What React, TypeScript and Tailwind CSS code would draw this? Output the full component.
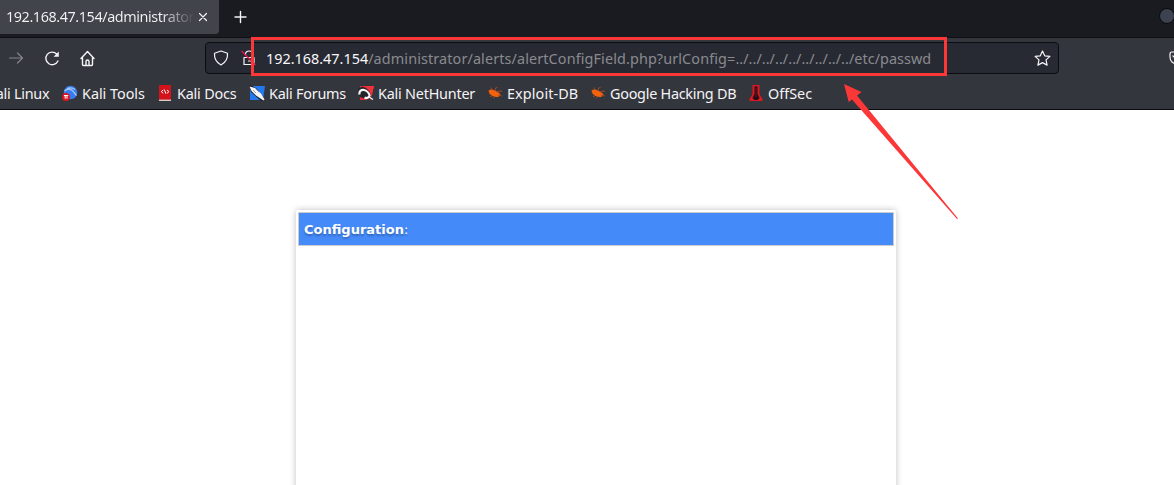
import React from "react";

const stroke = { fill: "none", stroke: "#f4f4f6", strokeWidth: 1.2, strokeLinecap: "round", strokeLinejoin: "round" } as const;

function ToolsIcon() {
  return (
    <svg width="16" height="16" viewBox="0 0 16 16">
      <circle cx="8.5" cy="7.5" r="6.8" fill="#367bf0" />
      <path d="M2.500 6C6 3 10.500 4 12 7.500l2.500 3M5 3.500c3-1 6-.5 8 1" fill="none" stroke="#a9cbf8" strokeWidth="1.200" />
      <circle cx="4" cy="12" r="3.900" fill="#e0141f" />
      <path d="M2 10.500h4.200M3.200 10.500v3.200M5 10.500v3.200" stroke="#fff" strokeWidth="1" />
    </svg>
  );
}

function DocsIcon() {
  return (
    <svg width="16" height="16" viewBox="0 0 16 16">
      <path d="M3 0h11v16H3a1 1 0 0 1-1-1V1a1 1 0 0 1 1-1z" fill="#d4121a" />
      <path d="M2 14.600h12V16H2z" fill="#d8c9c9" />
      <path d="M6.200 5 4.300 6.600l1.900 1.700M10 5l1.900 1.600L10 8.300M7.300 4.500l1.600 4.200" fill="none" stroke="#fff" strokeWidth="1" />
    </svg>
  );
}

function ForumsIcon() {
  return (
    <svg width="16" height="16" viewBox="0 0 16 16">
      <path d="M1 1h15l-2 14H1z" fill="#2478ef" />
      <path d="M0 0h2l6 4 7 10v2h-3L2 7z" fill="#20242c" />
      <path d="M.5 1.500 6 3l3.500 3.500L12 8.500l3.500 6-1 1-4.500-3-3-2-4.500-4.500z" fill="#f5f5f5" />
      <path d="m4 5 3 3" stroke="#8a94a3" strokeWidth=".8" />
    </svg>
  );
}

function HunterIcon() {
  return (
    <svg width="16" height="16" viewBox="0 0 16 16">
      <path d="M2 1h14l-3 14H2z" fill="#e62b32" />
      <path d="M0 4 4 1.500l4 1.500 4 4 2 7-4 1-8-3-2-3z" fill="#25262c" />
      <path d="M1.500 9.500C1 5.500 3.500 4.500 6 5s5 3 5.500 5-2.500 4-5 2.500" fill="none" stroke="#f7f7f7" strokeWidth="2.200" />
      <path d="m11 12 4 2.500" stroke="#f7f7f7" strokeWidth="1.400" />
      <path d="M7 1h9l-2.500 9L11 5z" fill="#f0333b" />
    </svg>
  );
}

function BugIcon() {
  return (
    <svg width="16" height="16" viewBox="0 0 16 16">
      <path d="M1.500 6C2.500 4 5 4 8 5.500l4 2.200 1.500 2-2 2C8 12.500 4.500 11 2.500 8.500z" fill="#f4610c" />
      <path d="m5 5-1-2.500M8 6l.5-3 2-.5M10 7l3-1 2 .5M5 11l-2 .5M8 11.500 6 13.500M11 10l4 1" fill="none" stroke="#a34a22" strokeWidth=".9" />
    </svg>
  );
}

function OffSecIcon() {
  return (
    <svg width="16" height="16" viewBox="0 0 16 16">
      <path d="M4.500 0h7v9l3 5v2H1.500v-2l3-5z" fill="#da1823" />
      <path d="M6.500 1.500h3V9l2 4-2 2h-3l-2-2 2-4z" fill="#260d13" />
      <path d="M8 3v9" stroke="#79131c" />
    </svg>
  );
}

function Bookmark({ icon, label, width }: { icon: React.ReactNode; label: string; width: string }) {
  return (
    <div className={`flex shrink-0 items-center ${width}`}>
      <span className="w-5 shrink-0">{icon}</span>
      <span>{label}</span>
    </div>
  );
}

function TabStrip() {
  return (
    <div className="flex h-[38px] shrink-0 items-start border-b border-[#0e0f13] bg-[#1a1b20]">
      <div className="flex h-[34px] w-[219px] shrink-0 items-center rounded-br bg-[#42444b] pl-[6px] text-[14.4px] text-[#f4f4f6]">
        <span className="w-[189px] bg-linear-to-r from-[#f4f4f6] from-82% to-[#42444b] to-100% bg-clip-text tracking-[-0.42px] whitespace-nowrap text-transparent">192.168.47.154/administrator</span>
        <svg className="ml-[3px]" width="10" height="10" viewBox="0 0 10 10"><path d="m1.500 1.500 7 7M8.500 1.500l-7 7" {...stroke} /></svg>
      </div>
      <svg className="mt-[10px] ml-[14px]" width="14" height="14" viewBox="0 0 14 14"><path d="M7.500 1.500v11M2 7h11" {...stroke} strokeWidth="1.400" /></svg>
      <div className="mt-2 ml-auto h-4 w-[15px] shrink-0 overflow-hidden">
        <div className="size-4 rounded-full border border-[#090a0e] bg-[#3d4251]" />
      </div>
    </div>
  );
}

function NavBar() {
  return (
    <div className="flex h-10 shrink-0 items-center">
      <svg className="ml-2" width="16" height="16" viewBox="0 0 16 16"><path d="M1.500 8h13M9.500 3l5 5-5 5" {...stroke} stroke="#85868c" /></svg>
      <svg className="ml-5" width="16" height="16" viewBox="0 0 16 16"><path d="M13.900 11A6.300 6.300 0 1 1 12.700 4" {...stroke} strokeWidth="1.400" /><path d="M14.800 1.500v5.200H9.600z" fill="#f4f4f6" /></svg>
      <svg className="ml-5" width="16" height="17" viewBox="0 0 16 17"><path d="M1 8.500 7.500 1.500l6.500 7M2.500 7.500v7c0 .8.300 1 1 1h8c.7 0 1-.2 1-1v-7M6 15.500v-4c0-2 3-2 3 0v4" {...stroke} strokeWidth="1.400" /></svg>
      <div className="ml-[109px] flex h-8 w-[854px] shrink-0 items-center rounded border border-[#0c0d12] bg-[#282a33] text-[14.4px] whitespace-nowrap">
        <svg className="ml-[7px] shrink-0" width="16" height="16" viewBox="0 0 16 16"><path d="M8 1 14.500 3.300c.4 5-1.500 9-6.500 11.700C3 12.300 1.100 8.300 1.500 3.300z" {...stroke} /></svg>
        <svg className="ml-3 shrink-0" width="16" height="16" viewBox="0 0 16 16"><path d="M3 7.500h10v7H3zM4.500 5V4c0-4 7-4 7 0v3.500M7.500 11h2" {...stroke} /><path d="m.5 1 14 14" stroke="#e5124d" strokeWidth="1.300" /></svg>
        <span className="ml-[9px] w-[768px] pt-[2px] text-[#f7f7fa]">192.168.47.154<span className="tracking-[0.115px] text-[#898a90]">/administrator/alerts/alertConfigField.php?urlConfig=<span className="tracking-[0.05px]">../../../../../../../../../etc/passwd</span></span></span>
        <svg className="shrink-0" width="17" height="17" viewBox="0 0 17 17"><path d="m8.500 1 2.200 4.800 5.200.6-3.900 3.500 1.100 5.200-4.600-2.500-4.600 2.500L5 9.900 1.100 6.400l5.200-.6z" {...stroke} /></svg>
      </div>
      <div className="ml-auto w-[5px] shrink-0 overflow-hidden">
        <svg width="16" height="16" viewBox="0 0 16 16"><path d="M3 2h11v5c0 9-13 9-13 0V4c0-1 .5-2 2-2zM4 6l4 4 4-4" {...stroke} /></svg>
      </div>
    </div>
  );
}

export default function App() {
  return (
    <div className="relative flex h-[485px] w-[1174px] flex-col overflow-hidden bg-white font-['Noto_Sans',sans-serif]">
      <TabStrip />
      <header className="flex h-[72px] shrink-0 flex-col border-b border-[#0c0d12] bg-[#34363d]">
        <NavBar />
        <nav className="flex h-[31px] items-center overflow-hidden text-[14.4px] whitespace-nowrap text-[#f4f4f6]">
          <span className="-ml-[13px] w-[75px] shrink-0 tracking-[-0.25px]">Kali Linux</span>
          <Bookmark icon={<ToolsIcon />} label="Kali Tools" width="w-[95px] tracking-[-0.03px]" />
          <Bookmark icon={<DocsIcon />} label="Kali Docs" width="w-[92px] tracking-[-0.2px]" />
          <Bookmark icon={<ForumsIcon />} label="Kali Forums" width="w-[109px] tracking-[-0.23px]" />
          <Bookmark icon={<HunterIcon />} label="Kali NetHunter" width="w-[129px] tracking-[-0.22px]" />
          <Bookmark icon={<BugIcon />} label="Exploit-DB" width="w-[103px] tracking-[0.1px]" />
          <Bookmark icon={<BugIcon />} label="Google Hacking DB" width="w-[158px] tracking-[-0.26px]" />
          <Bookmark icon={<OffSecIcon />} label="OffSec" width="w-[80px]" />
        </nav>
      </header>
      <main className="flex grow pt-[100px] pl-[296px]">
        <section className="h-[300px] w-[600px] shrink-0 rounded-t-xs bg-white p-[2px] shadow-[0_0_6px_rgba(0,0,0,0.25)]">
          <div className="flex h-[34px] items-center border border-[#ccc] bg-[#448af8] pt-[2px] pl-[5px] font-['DejaVu_Sans',sans-serif] text-[13px] text-white [text-shadow:0_2px_2px_rgba(0,0,0,0.25)]">
            <b>Configuration</b>:
          </div>
        </section>
      </main>
      <div className="absolute top-[37px] left-[251px] h-[39px] w-[696px] border-3 border-[#fb3737]" />
      <svg className="absolute top-[84px] left-[844px]" width="115" height="136" viewBox="0 0 115 136">
        <path d="M0 0 17.500 8 13 11.500 114 134.500 113 135 8 15.500 4.700 18z" fill="#fb3737" />
      </svg>
    </div>
  );
}
